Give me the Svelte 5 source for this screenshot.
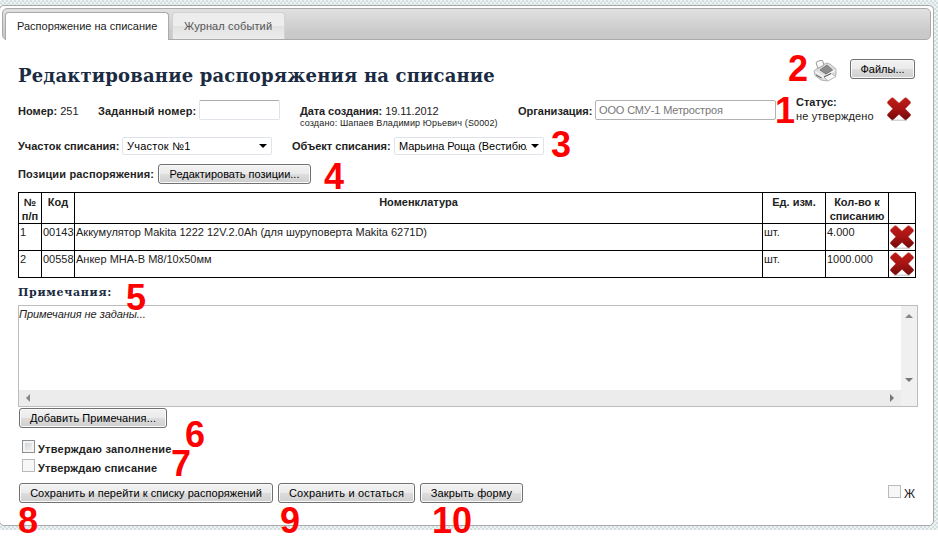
<script>
  const rows = [
    { n: 1, code: '00143', name: 'Аккумулятор Makita 1222 12V.2.0Ah (для шуруповерта Makita 6271D)', unit: 'шт.', qty: '4.000' },
    { n: 2, code: '00558', name: 'Анкер МНА-В М8/10х50мм', unit: 'шт.', qty: '1000.000' }
  ];
  const marks = [
    ['2', 788, 48], ['1', 775, 90], ['3', 551, 124], ['4', 324, 156], ['5', 126, 277],
    ['6', 185, 414], ['7', 171, 443], ['8', 18, 500], ['9', 280, 500], ['10', 432, 500]
  ];
</script>

{#snippet cross()}
  <svg class="cross" width="24" height="24" viewBox="0 0 24 24" aria-hidden="true">
    <defs>
      <linearGradient id="red" x1="0" y1="0" x2="0" y2="1">
        <stop offset="0" stop-color="#bd1d16" /><stop offset=".5" stop-color="#a81414" /><stop offset="1" stop-color="#740a0a" />
      </linearGradient>
    </defs>
    <path d="M4 23.200h16" stroke="#c9c9c9" stroke-width="1.2" />
    <path d="M.8 4.500 4.300 1.200q1.200-.8 2.200 0L12 6.300 17.500 1.200q1-.8 2.200 0l3.500 3.300q.7 1 0 2L18.100 11.800l5.100 5.200q.7 1 0 2l-3.500 3.300q-1.200.8-2.200 0L12 17.300l-5.500 5q-1 .8-2.200 0L.8 19q-.7-1 0-2l5.100-5.200L.8 6.500q-.7-1 0-2z" fill="url(#red)" stroke="url(#red)" stroke-width=".5" />
  </svg>
{/snippet}

<div class="page">
  <div class="backdrop">
    <div class="panel">
      <div class="tabs">
        <div class="tab active"><span>Распоряжение на списание</span></div>
        <div class="tab"><span>Журнал событий</span></div>
      </div>
      <main>
        <header>
          <h1>Редактирование распоряжения на списание</h1>
          <svg class="printer" width="24" height="24" viewBox="0 0 24 24" aria-hidden="true">
            <path d="M1 12 4 9.500l9-5.500 4 1 6 5v6l-9 6L8 21l-6-4.500z" fill="#dedede" stroke="#a2a2a2" stroke-width=".8" />
            <path d="M3 3.500Q6 .8 9.500 1.500L11 6 5 9.500z" fill="#f7f7f7" stroke="#8f8f8f" stroke-width=".9" />
            <path d="m7 11 7-5 5.500 5-6.500 4z" fill="#8c8c8c" stroke="#5e5e5e" stroke-width=".7" />
            <path d="m2 12.500 9 5.500 11.500-7" fill="none" stroke="#f6f6f6" stroke-width="1.300" />
            <path d="m11 18 7.500-3.500 4.500 3-8 4.500z" fill="#f8f8f8" stroke="#aaa" stroke-width=".8" />
            <path d="m3 16 5.500 3M11 18l7-3.500" stroke="#555" />
          </svg>
          <button class="files"><span>Файлы...</span></button>
        </header>

        <div class="info">
          <div class="num"><b>Номер:</b> 251</div>
          <div class="given"><b>Заданный номер:</b></div>
          <input class="in1" aria-label="Заданный номер" />
          <div class="date"><div class="dl"><b>Дата создания:</b> 19.11.2012</div><small>создано: Шапаев Владимир Юрьевич (S0002)</small></div>
          <div class="org"><b>Организация:</b></div>
          <input class="in2" value="ООО СМУ-1 Метростроя" aria-label="Организация" />
          <div class="status"><b>Статус:</b><br /><span>не утверждено</span></div>
          {@render cross()}
        </div>

        <div class="selects">
          <b class="s1l">Участок списания:</b>
          <div class="select"><span class="s1">Участок №1</span><i></i></div>
          <b class="s2l">Объект списания:</b>
          <div class="select"><span class="s2">Марьина Роща (Вестибюль)</span><i></i></div>
        </div>

        <div class="positions"><b>Позиции распоряжения:</b><button><span>Редактировать позиции...</span></button></div>

        <table>
          <colgroup><col class="w-n" /><col class="w-code" /><col class="w-name" /><col class="w-q" /><col class="w-q" /><col class="w-x" /></colgroup>
          <thead><tr><th>№<br />п/п</th><th>Код</th><th>Номенклатура</th><th>Ед. изм.</th><th>Кол-во к<br />списанию</th><th></th></tr></thead>
          <tbody>
            {#each rows as r}
              <tr><td>{r.n}</td><td>{r.code}</td><td>{r.name}</td><td>{r.unit}</td><td>{r.qty}</td><td class="x">{@render cross()}</td></tr>
            {/each}
          </tbody>
        </table>

        <h2>Примечания:</h2>
        <div class="notes">
          <div class="text"><em>Примечания не заданы...</em></div>
          <div class="vbar"><i class="up"></i><i class="down"></i></div>
          <div class="hbar"><i class="left"></i><i class="right"></i></div>
          <div class="corner"></div>
        </div>
        <button class="add"><span>Добавить Примечания...</span></button>

        <div class="checks">
          <div class="check"><i class="box on"></i><b class="c1">Утверждаю заполнение</b></div>
          <div class="check"><i class="box"></i><b class="c2">Утверждаю списание</b></div>
        </div>

        <footer>
          <button class="b1"><span>Сохранить и перейти к списку распоряжений</span></button>
          <button class="b2"><span>Сохранить и остаться</span></button>
          <button class="b3"><span>Закрыть форму</span></button>
          <div class="zh"><i class="box"></i><span>Ж</span></div>
        </footer>
      </main>
    </div>
  </div>
  {#each marks as [t, x, y]}
    <span class="mark" style:left="{x}px" style:top="{y}px">{t}</span>
  {/each}
</div>

<style>
  :global(body) { background: #fff; }
  .page, .page * { box-sizing: border-box; }
  .page {
    position: relative; width: 938px; height: 546px; overflow: hidden;
    font: 11px/14px "Liberation Sans", Arial, sans-serif; color: #222;
  }
  .backdrop { height: 530px; padding-top: 5px; background: conic-gradient(#d3dfe1 25%, #edf2f3 0 50%, #d3dfe1 0 75%, #edf2f3 0) 0 0 / 4px 4px; }
  .panel { width: 935px; height: 521px; margin-left: -1px; padding: 2px 2px 0; border: 1px solid #aaa; border-radius: 5px; background: #fff; }
  .tabs { display: flex; align-items: flex-end; gap: 3px; height: 32px; width: 929px; padding-left: 2px; border: 1px solid #aaa; border-radius: 5px; background: linear-gradient(#e1e1e1, #c9c9c9 80%); }
  .tab { height: 27px; width: 113px; padding: 6px 0 0 11px; border-radius: 4px 4px 0 0; color: #555; background: linear-gradient(#ededed 50%, #e2e2e2 50%, #ececec); border: 1px solid #d3d3d3; border-bottom: 0; white-space: nowrap; letter-spacing: .12px; }
  .tab.active { width: 164px; height: 28px; margin-bottom: -1px; border-color: #aaa; background: #fff; color: #212121; letter-spacing: 0; }
  main { padding-left: 16px; }
  header { display: flex; height: 60px; padding-top: 19px; align-items: flex-start; }
  h1 { margin: 6px 0 0; width: 795px; font: bold 18px/22px "DejaVu Serif", serif; letter-spacing: .17px; color: #1a2b42; white-space: nowrap; }
  .printer { margin-right: 13px; }
  b, span, em, small, th, td, .dl { white-space: nowrap; }
  button { display: inline-flex; justify-content: center; align-items: center; height: 20px; padding: 0; font: inherit; color: #000; border: 1px solid #707070; border-radius: 3px; background: linear-gradient(#f2f2f2, #ebebeb 48%, #dddddd 50%, #cfcfcf); box-shadow: inset 0 0 0 1px #fafafa; }
  .files { width: 65px; }
  input { height: 20px; margin: 0; padding: 0 3px; font: inherit; color: #777; border: 1px solid #e2e3ea; border-top-color: #abadb3; border-radius: 2px; background: #fff; }
  .info { display: flex; height: 37px; }
  .info > div { padding-top: 4px; }
  .num { width: 80px; }
  .given { width: 101px; letter-spacing: .13px; }
  .in1 { width: 81px; margin-right: 20px; }
  .date { width: 218px; }
  .dl { letter-spacing: -.08px; }
  small { display: block; font-size: 9px; line-height: 11px; letter-spacing: .14px; }
  .org { width: 77px; }
  .in2 { width: 181px; border-color: #b0b2b6; margin-right: 20px; letter-spacing: -.14px; }
  .info > .status { width: 91px; margin-top: -5px; padding-top: 0; }
  .status span { letter-spacing: .15px; }
  .info .cross { margin-top: -3px; }
  .selects { display: flex; height: 27px; }
  .selects b { line-height: 18px; }
  .s1l { width: 104px; }
  .s2l { width: 102px; margin-left: 20px; }
  .select { display: flex; align-items: center; width: 150px; height: 18px; padding-left: 4px; border: 1px solid #dfe3ea; border-radius: 2px; color: #000; }
  .select span { width: 128px; overflow: hidden; }
  .s1 { letter-spacing: .25px; }
  .s2 { letter-spacing: -.05px; }
  .select i { margin-left: 4px; border: 4px solid transparent; border-top-color: #000; border-bottom: 0; }
  .positions { display: flex; height: 28px; }
  .positions b { width: 140px; line-height: 20px; letter-spacing: .17px; }
  .positions button { width: 153px; }
  table { table-layout: fixed; width: 898px; border-collapse: collapse; }
  .w-n { width: 23px; }
  .w-code { width: 33px; }
  .w-name { width: 688px; }
  .w-q { width: 63px; }
  .w-x { width: 27px; }
  th, td { padding: 1px; border: 1px solid #000; vertical-align: top; line-height: 14px; }
  th { height: 31px; padding-top: 2px; padding-bottom: 0; }
  td { height: 27px; }
  td.x { line-height: 0; }
  h2 { margin: 8px 0 5px; height: 14px; font: bold 11px/14px "DejaVu Serif", serif; letter-spacing: .7px; color: #1a2b42; }
  .notes { display: grid; grid-template: 84px 16px / 882px 16px; width: 900px; height: 102px; border: 1px solid #bcbcbc; background: #fff; }
  .text { padding: 1px 0 0; letter-spacing: -.05px; }
  .vbar { display: flex; flex-direction: column; justify-content: space-between; align-items: center; padding: 8px 0; background: #f0f0f0; }
  .hbar { display: flex; align-items: center; justify-content: space-between; padding: 0 7px; background: #ececec; }
  .corner { background: #f0f0f0; }
  .notes i { border: 4px solid transparent; }
  .notes .up { border-top: 0; border-bottom-color: #888; }
  .notes .down { border-bottom: 0; border-top-color: #777; }
  .notes .left { border-left: 0; border-right-color: #888; }
  .notes .right { border-right: 0; border-left-color: #777; }
  .add { display: flex; width: 148px; margin: 1px 0 0 1px; letter-spacing: .08px; }
  .checks { padding: 12px 0 0 4px; }
  .check { display: flex; height: 19px; }
  .box { width: 13px; height: 13px; margin-right: 3px; border: 1px solid #bbb; background: #f7f7f7; }
  .box.on { border-color: #8e8f8f; background: linear-gradient(135deg, #cbcfd5, #f6f6f6); box-shadow: inset 0 0 0 2px #f4f4f4; }
  .check b { margin-top: 2px; }
  .c1 { letter-spacing: .25px; }
  .c2 { letter-spacing: .16px; }
  footer { display: flex; padding: 5px 0 0 1px; }
  .b1 { width: 254px; margin-right: 5px; letter-spacing: .05px; }
  .b2 { width: 137px; margin-right: 5px; letter-spacing: .18px; }
  .b3 { width: 103px; letter-spacing: .12px; }
  .zh { display: flex; margin: 2px 0 0 365px; }
  .zh span { margin-top: 2px; font-size: 12px; }
  .mark { position: absolute; font: bold 36px/41px "Liberation Sans", Arial, sans-serif; color: #f00; }
</style>
